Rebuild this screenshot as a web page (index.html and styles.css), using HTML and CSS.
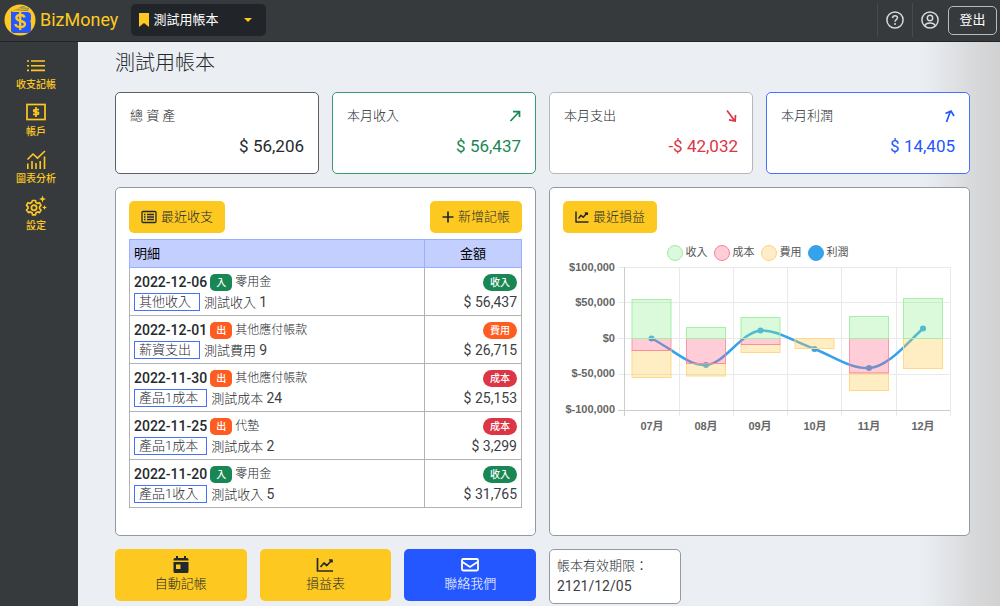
FILE: index.html
```html
<!DOCTYPE html>
<html lang="zh-Hant">
<head>
<meta charset="utf-8">
<meta name="viewport" content="width=device-width, initial-scale=1">
<title>BizMoney</title>
<link rel="stylesheet" href="styles.css">
</head>
<body>
<header class="topbar">
  <a class="brand" href="#">
    <svg class="brand-logo" viewBox="0 0 32 32" aria-hidden="true">
      <circle cx="16" cy="16" r="15.5" fill="#fdc921"/>
      <path d="M9 6.500q5-2.500 10-4.500l6 2-1 3z" fill="#8a8560"/>
      <path d="M11 5l12-1.500M11 6.500l13-1.500" stroke="#fdc921" stroke-width=".7"/>
      <path d="M7 6q0 2 3 2h13q4 0 4 4v3q0 2-1 2 1 1 1 3v5q0 4-4 4H10q-3 0-3-3z" fill="#2457ff"/>
      <path d="M20.500 13.500q-.5-2.500-4.200-2.500t-4 2.800c0 4 8.700 2 8.700 6.200q0 3-4.700 3t-4.800-3M16.200 8v18" fill="none" stroke="#fdc921" stroke-width="2.300"/>
    </svg>
    <span>BizMoney</span>
  </a>
  <div class="book-picker">
    <svg class="bookmark" viewBox="0 0 10 14" aria-hidden="true"><path d="M0 0h10v14l-5-4-5 4z" fill="currentColor"/></svg>
    <select class="book-select" aria-label="帳本"><option>測試用帳本</option></select>
    <svg class="caret" viewBox="0 0 8 4" aria-hidden="true"><path d="M0 0h8L4 4z" fill="currentColor"/></svg>
  </div>
  <nav class="tools" aria-label="使用者">
    <a class="tool" href="#" aria-label="說明">
      <svg class="tool-icon" viewBox="0 0 16 16" fill="none" stroke="currentColor" aria-hidden="true"><circle cx="8" cy="8" r="7.200" stroke-width="1.300"/><path d="M5.800 6.300C5.900 4.900 6.700 4.200 8 4.200s2.200.8 2.200 1.900c0 1.600-2.200 1.500-2.200 3.400" stroke-width="1.300"/><circle cx="8" cy="11.600" r=".4"/></svg>
    </a>
    <a class="tool" href="#" aria-label="帳號">
      <svg class="tool-icon" viewBox="0 0 16 16" fill="none" stroke="currentColor" stroke-width="1.300" aria-hidden="true"><circle cx="8" cy="8" r="7.200"/><circle cx="8" cy="6.200" r="2.400"/><path d="M3.200 13.200c1-2 2.500-2.500 4.800-2.500s3.800.5 4.800 2.500"/></svg>
    </a>
    <button class="logout" type="button">登出</button>
  </nav>
</header>
<div class="shell">
  <nav class="sidebar" aria-label="主選單">
    <a class="side-link" href="#">
      <svg class="side-icon" viewBox="0 0 20 20" fill="none" stroke="currentColor" stroke-width="1.600" aria-hidden="true"><path d="M5 5h14M5 9.700h14M5 14.400h14M1 5h2M1 9.700h2M1 14.400h2"/></svg>
      <span>收支記帳</span>
    </a>
    <a class="side-link" href="#">
      <svg class="side-icon" viewBox="0 0 20 20" fill="none" stroke="currentColor" stroke-width="1.700" aria-hidden="true"><rect x="1" y="1.500" width="18" height="15"/><path d="M13 6.700H9.200q-1.600 0-1.600 1.100t1.600 1.200h1.800q1.700 0 1.700 1.200t-1.700 1.200H7M10 4v10"/></svg>
      <span>帳戶</span>
    </a>
    <a class="side-link" href="#">
      <svg class="side-icon" viewBox="0 0 20 20" fill="none" stroke="currentColor" stroke-width="1.600" aria-hidden="true"><path d="M1.500 9.500L7 4l4.500 4.200L19 1M1.800 19v-5.500M6 19v-8M10 19v-6M14.200 19v-8M18.500 19V6.500"/></svg>
      <span>圖表分析</span>
    </a>
    <a class="side-link" href="#">
      <svg class="side-icon" viewBox="0 0 20 20" fill="none" stroke="currentColor" stroke-width="1.700" stroke-linejoin="round" aria-hidden="true"><path d="M6.500 3.500h3l.5 2.100 1.500.8 2-.7 1.500 2.600-1.500 1.500v1.700l1.500 1.500-1.500 2.600-2-.7-1.500.8-.5 2.200h-3l-.5-2.200-1.500-.8-2 .7L.5 13 2 11.500V9.800L.5 8.300 2 5.700l2 .7 1.500-.8z"/><circle cx="8" cy="10.700" r="2.600"/><path d="M16.500-1.500l.9 2.600 2.600.9-2.600.9-.9 2.600-.9-2.600L13 2l2.600-.9zM18.500 8l.7 1.800 1.800.7-1.800.7-.7 1.800-.7-1.800-1.800-.7 1.800-.7z" fill="currentColor" stroke="none"/></svg>
      <span>設定</span>
    </a>
  </nav>
  <main class="content">
    <h1 class="page-title">測試用帳本</h1>
    <section class="stats">
      <article class="card stat stat-assets">
        <h2 class="stat-label">總 資 產</h2>
        <p class="stat-value">$ 56,206</p>
      </article>
      <article class="card stat stat-income">
        <h2 class="stat-label">本月收入 <svg class="trend" viewBox="0 0 12 12" aria-hidden="true"><path d="M1.500 11L10 2M4 1.700h6.500V7"/></svg></h2>
        <p class="stat-value">$ 56,437</p>
      </article>
      <article class="card stat stat-expense">
        <h2 class="stat-label">本月支出 <svg class="trend" viewBox="0 0 12 12" aria-hidden="true"><path d="M1 .5L8.500 10.500M3 9.800l6.200 1.200.3-6"/></svg></h2>
        <p class="stat-value">-$ 42,032</p>
      </article>
      <article class="card stat stat-profit">
        <h2 class="stat-label">本月利潤 <svg class="trend" viewBox="0 0 12 12" aria-hidden="true"><path d="M3.500 12L7.500 1M2.500 3.500l5.500-2.500L11 6"/></svg></h2>
        <p class="stat-value">$ 14,405</p>
      </article>
    </section>
    <section class="panels">
      <article class="card panel">
        <div class="panel-head">
          <button class="btn" type="button"><svg class="btn-icon" viewBox="0 0 16 14" fill="none" stroke="currentColor" stroke-width="1.300" aria-hidden="true"><rect x="1" y="1.500" width="14" height="11" rx="1"/><path d="M3 4.500h1.500M3 7h1.500M3 9.500h1.500M6 4.500h7M6 7h7M6 9.500h7"/></svg>最近收支</button>
          <button class="btn" type="button"><svg class="btn-icon plus" viewBox="0 0 12 12" fill="none" stroke="currentColor" stroke-width="1.700" aria-hidden="true"><path d="M6 .5v11M.5 6h11"/></svg>新增記帳</button>
        </div>
        <table class="ledger">
          <thead><tr><th class="detail-head" scope="col">明細</th><th class="amount-head" scope="col">金額</th></tr></thead>
          <tbody>
            <tr><td><div class="line"><b class="date">2022-12-06</b><span class="flow in">入</span><span class="account">零用金</span></div><div class="line memo"><span class="tag">其他收入</span><span>測試收入 <span class="num">1</span></span></div></td><td class="amount"><div class="line"><span class="pill in">收入</span></div><div class="line num">$ 56,437</div></td></tr>
            <tr><td><div class="line"><b class="date">2022-12-01</b><span class="flow out">出</span><span class="account">其他應付帳款</span></div><div class="line memo"><span class="tag">薪資支出</span><span>測試費用 <span class="num">9</span></span></div></td><td class="amount"><div class="line"><span class="pill out">費用</span></div><div class="line num">$ 26,715</div></td></tr>
            <tr><td><div class="line"><b class="date">2022-11-30</b><span class="flow out">出</span><span class="account">其他應付帳款</span></div><div class="line memo"><span class="tag">產品1成本</span><span>測試成本 <span class="num">24</span></span></div></td><td class="amount"><div class="line"><span class="pill cost">成本</span></div><div class="line num">$ 25,153</div></td></tr>
            <tr><td><div class="line"><b class="date">2022-11-25</b><span class="flow out">出</span><span class="account">代墊</span></div><div class="line memo"><span class="tag">產品1成本</span><span>測試成本 <span class="num">2</span></span></div></td><td class="amount"><div class="line"><span class="pill cost">成本</span></div><div class="line num">$ 3,299</div></td></tr>
            <tr><td><div class="line"><b class="date">2022-11-20</b><span class="flow in">入</span><span class="account">零用金</span></div><div class="line memo"><span class="tag">產品1收入</span><span>測試收入 <span class="num">5</span></span></div></td><td class="amount"><div class="line"><span class="pill in">收入</span></div><div class="line num">$ 31,765</div></td></tr>
          </tbody>
        </table>
      </article>
      <article class="card panel">
        <div class="panel-head">
          <button class="btn" type="button"><svg class="btn-icon chart-icon" viewBox="0 0 14 14" fill="none" stroke="currentColor" stroke-width="1.500" stroke-linejoin="round" aria-hidden="true"><path d="M1 1.500v10.500h12.500M3.500 8.500l2.500-3.200 2.200 2L12 3M9.800 3h2.500v2"/></svg>最近損益</button>
        </div>
        <ul class="legend">
          <li class="key"><span class="dot dot-income"></span>收入</li>
          <li class="key"><span class="dot dot-cost"></span>成本</li>
          <li class="key"><span class="dot dot-fee"></span>費用</li>
          <li class="key"><span class="dot dot-profit"></span>利潤</li>
        </ul>
        <svg class="chart" viewBox="0 0 393 176" role="img" aria-label="最近損益">
          <path class="grid" d="M55 5.500h332M55 40.500h332M55 76.500h332M55 112.500h332M116.500 5v149M170.500 5v149M224.500 5v149M278.500 5v149M333.500 5v149M387.500 5v149"/>
          <path class="axis" d="M55 148.500h332M61.500 5v149"/>
          <path class="profit" d="M88.500 76.500C110 87 125 104 143 103C162 102 177 71 197.500 68.500C212 67 230 79 251.500 87C270 94 287 107 306 106C325 105 343 82 360 66.500"/>
          <g class="point"><circle cx="88.500" cy="76.500" r="3"/><circle cx="143" cy="103" r="3"/><circle cx="197.500" cy="68.500" r="3"/><circle cx="251.500" cy="87" r="3"/><circle cx="306" cy="106" r="3"/><circle cx="360" cy="66.500" r="3"/></g>
          <g class="bar-fee"><rect x="69" y="88.500" width="39" height="27"/><rect x="123.500" y="101.500" width="39" height="12.500"/><rect x="178" y="82.500" width="39" height="8"/><rect x="232" y="76.500" width="39" height="10"/><rect x="286.500" y="111" width="39" height="17.500"/><rect x="340.500" y="76.500" width="39" height="30"/></g>
          <g class="bar-cost"><rect x="69" y="76.500" width="39" height="12"/><rect x="123.500" y="76.500" width="39" height="25"/><rect x="178" y="76.500" width="39" height="6"/><rect x="286.500" y="76.500" width="39" height="34.500"/></g>
          <g class="bar-income"><rect x="69" y="37.500" width="39" height="39"/><rect x="123.500" y="65.500" width="39" height="11"/><rect x="178" y="55.500" width="39" height="21"/><rect x="286.500" y="54.500" width="39" height="22"/><rect x="340.500" y="36.500" width="39" height="40"/></g>
          <g class="tick" text-anchor="end"><text x="52" y="9">$100,000</text><text x="52" y="44">$50,000</text><text x="52" y="80">$0</text><text x="52" y="115">$-50,000</text><text x="52" y="151">$-100,000</text></g>
          <g class="tick" text-anchor="middle"><text x="89" y="168">07月</text><text x="143" y="168">08月</text><text x="197" y="168">09月</text><text x="252" y="168">10月</text><text x="306" y="168">11月</text><text x="360" y="168">12月</text></g>
        </svg>
      </article>
    </section>
    <section class="actions">
      <button class="action" type="button"><svg class="action-icon" viewBox="0 0 18 18" aria-hidden="true"><path d="M4 0h2v2h6V0h2v2h1Q16.500 2 16.500 3.500V4.500h-15V3.500Q1.500 2 3 2h1zM1.500 6h15v9.500q0 1.500-1.500 1.500H3q-1.500 0-1.500-1.500zM4 8.500v4.500h4.500V8.500z" fill="currentColor" fill-rule="evenodd"/></svg><span>自動記帳</span></button>
      <button class="action" type="button"><svg class="action-icon" viewBox="0 0 18 18" fill="none" stroke="currentColor" stroke-width="1.700" stroke-linejoin="round" aria-hidden="true"><path d="M1.500 2v13h15.500M4.500 11l3.500-4 2.800 2.500 4.700-5M13 4h3v2.500"/></svg><span>損益表</span></button>
      <button class="action action-contact" type="button"><svg class="action-icon" viewBox="0 0 18 18" fill="none" stroke="currentColor" stroke-width="1.800" aria-hidden="true"><rect x="1" y="3" width="16" height="11.500" rx="1.200"/><path d="M1.500 6L9 11l7.500-5"/></svg><span>聯絡我們</span></button>
      <div class="card expiry"><span>帳本有效期限：</span><time class="num" datetime="2121-12-05">2121/12/05</time></div>
    </section>
  </main>
</div>
</body>
</html>
```
FILE: styles.css
```css
* { box-sizing: border-box; }
body {
  margin: 0;
  min-height: 100vh;
  display: flex;
  flex-direction: column;
  background: #ebeff4;
  color: #24292d;
  font: 300 13px/20px Roboto, "Noto Sans CJK TC", sans-serif;
}
a { color: inherit; text-decoration: none; }
h1, h2, p, ul { margin: 0; padding: 0; font-weight: inherit; }
button, select { font: inherit; cursor: pointer; }
svg { flex: none; }

.topbar {
  display: flex;
  align-items: center;
  height: 42px;
  padding: 0 3px 1px 4px;
  background: #373a3d;
  border-bottom: 1px solid #222426;
}
.brand {
  display: flex;
  align-items: center;
  gap: 4px;
  margin-right: 13px;
  color: #fdc921;
  font-size: 18px;
  font-weight: 400;
}
.brand-logo { width: 32px; height: 32px; }
.book-picker {
  display: flex;
  align-items: center;
  width: 135px;
  height: 32px;
  padding: 0 14px 0 8px;
  gap: 4px;
  border-radius: 5px;
  background: #212529;
  color: #fdc921;
}
.bookmark { width: 10px; height: 14px; }
.book-select {
  flex: 1;
  min-width: 0;
  padding: 0;
  border: 0;
  appearance: none;
  background: transparent;
  color: #fff;
  font-weight: 400;
}
.caret { width: 8px; height: 4px; }
.tools { display: flex; align-items: center; margin-left: auto; }
.tool {
  display: grid;
  place-items: center;
  width: 35px;
  height: 34px;
  border-left: 1px solid #484b4e;
  color: #d8d9da;
}
.tool-icon { width: 18px; height: 18px; }
.logout {
  width: 49px;
  height: 29px;
  margin-left: 1px;
  padding: 0;
  border: 1px solid #b9babb;
  border-radius: 5px;
  background: transparent;
  color: #fff;
  font-weight: 400;
}

.shell { display: flex; flex: 1; }
.sidebar {
  flex: none;
  width: 78px;
  display: flex;
  flex-direction: column;
  gap: 10px;
  padding: 14px 6px 0 0;
  background: #373a3d;
  color: #fdc921;
}
.side-link {
  display: flex;
  flex-direction: column;
  align-items: center;
  gap: 1px;
  font-size: 10px;
  font-weight: 500;
  line-height: 16px;
}
.side-icon { width: 20px; height: 20px; overflow: visible; }
.content {
  flex: 1;
  min-width: 0;
  display: flex;
  flex-direction: column;
  gap: 13px;
  padding: 7px 30px 1px 37px;
  background: linear-gradient(to left, #d1d1d1, #d9dadc 30px, #ebeff4 80px);
}
.page-title { margin-bottom: 2px; font-size: 20px; line-height: 28px; }
.card { border: 1px solid #9299a2; border-radius: 5px; background: #fff; }

.stats { display: grid; grid-template-columns: repeat(4, 1fr); gap: 13px; }
.stat { padding: 13px 14px 16px; }
.stat-label { display: flex; justify-content: space-between; align-items: center; font-size: 13px; }
.stat-value { margin-top: 9px; text-align: right; font-size: 17px; font-weight: 400; line-height: 22px; }
.trend { width: 12px; height: 12px; overflow: visible; fill: none; stroke: currentColor; stroke-width: 1.7; }
.stat-assets { border-color: #5c6064; }
.stat-income { border-color: #3b9b70; }
.stat-income .trend, .stat-income .stat-value { color: #198754; }
.stat-expense { border-color: #b4b6b8; }
.stat-expense .trend, .stat-expense .stat-value { color: #dc3545; }
.stat-profit { border-color: #4571ff; }
.stat-profit .trend, .stat-profit .stat-value { color: #2457ff; }

.panels { display: grid; grid-template-columns: 1fr 1fr; gap: 13px; }
.panel { min-width: 0; padding: 13px 13px 27px; }
.panel-head { display: flex; justify-content: space-between; margin-bottom: 6px; }
.btn {
  display: flex;
  align-items: center;
  gap: 4px;
  height: 32px;
  padding: 0 12px;
  border: 0;
  border-radius: 5px;
  background: #fdc921;
  color: #24292d;
}
.btn-icon { width: 16px; height: 14px; }
.plus { width: 12px; height: 12px; }
.chart-icon { width: 14px; height: 14px; }

.ledger { width: 100%; border-collapse: collapse; }
.ledger th {
  height: 28px;
  padding: 0 4px;
  border: 1px solid #99afff;
  background: #c2cfff;
  color: #000;
  font-weight: 400;
}
.ledger .detail-head { text-align: left; }
.amount-head { width: 97px; }
.ledger td { height: 48px; padding: 4px 4px 3px; border: 1px solid #b0b2b4; }
.line { display: flex; align-items: center; height: 20px; gap: 3px; white-space: nowrap; }
.memo { gap: 4px; }
.date { font-size: 14px; font-weight: 500; }
.account { font-size: 12px; }
.flow, .pill {
  height: 17px;
  padding: 0 6px;
  border-radius: 5px;
  color: #fff;
  font-size: 10px;
  font-weight: 500;
  line-height: 17px;
}
.pill { padding: 0 7px; border-radius: 9px; }
.in { background: #198754; }
.out { background: #ff5c21; }
.cost { background: #dc3545; }
.tag { height: 18px; padding: 0 8px 0 4px; border: 1px solid #4571ff; line-height: 16px; }
.amount .line { justify-content: flex-end; }
.num { font-size: 14px; font-weight: 400; color: #3c4044; }

.legend { display: flex; justify-content: center; gap: 6px; padding: 5px 4px 0 0; list-style: none; }
.key { display: flex; align-items: center; gap: 3px; height: 18px; color: #555; font-size: 11px; font-weight: 400; }
.dot { width: 16px; height: 16px; border: 1px solid; border-radius: 50%; }
.dot-income { border-color: #a3eaa5; background: #dbf9dc; }
.dot-cost { border-color: #fb7f9b; background: #ffcdd8; }
.dot-fee { border-color: #ffd477; background: #ffedca; }
.dot-profit { border-color: #36a2eb; background: #36a2eb; }
.chart { display: block; width: 100%; height: auto; }
.grid { fill: none; stroke: #e9e9e9; }
.axis { fill: none; stroke: #cdcdcd; }
.profit { fill: none; stroke: #36a2eb; stroke-width: 2.5; }
.point { fill: #36a2eb; }
.bar-income { fill: #90ee90; fill-opacity: .32; stroke: #a5efa7; }
.bar-cost { fill: #ff6384; fill-opacity: .32; stroke: #fb7f9b; stroke-opacity: .8; }
.bar-fee { fill: #ffcd56; fill-opacity: .35; stroke: #ffd985; }
.tick { fill: #666; font: bold 11px "Liberation Sans", "Noto Sans CJK TC", sans-serif; }

.actions { display: grid; grid-template-columns: repeat(6, 1fr); gap: 13px; align-items: start; }
.action {
  display: flex;
  flex-direction: column;
  align-items: center;
  height: 52px;
  padding: 7px 0 0;
  border: 0;
  border-radius: 5px;
  background: #fdc921;
  color: #24292d;
}
.action-icon { width: 18px; height: 18px; }
.action-contact { background: #2457ff; color: #fff; }
.expiry { display: flex; flex-direction: column; padding: 6px 7px 7px; white-space: nowrap; }
```
